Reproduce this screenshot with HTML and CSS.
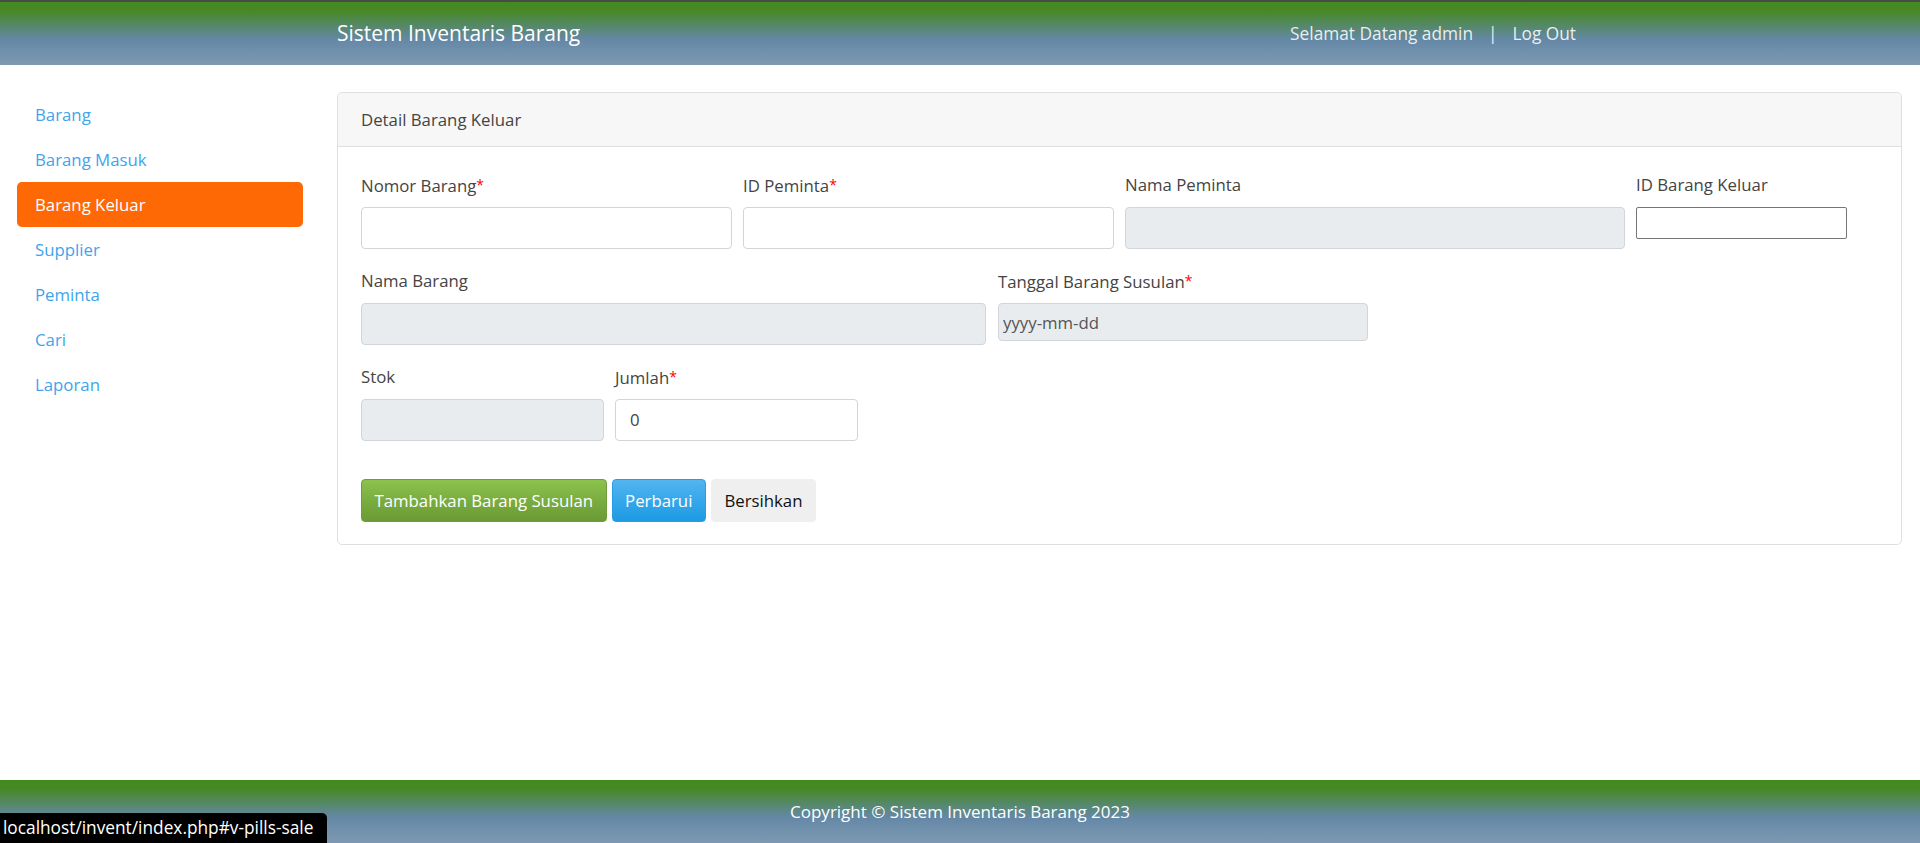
FILE: index.html
```html
<!DOCTYPE html>
<html lang="id">
<head>
<meta charset="utf-8">
<title>Sistem Inventaris Barang</title>
<link rel="stylesheet" href="styles.css">
</head>
<body>
<header class="topbar">
  <div class="topbar-inner">
    <a class="brand" href="#">Sistem Inventaris Barang</a>
    <div class="user-nav">
      <span class="welcome">Selamat Datang admin</span>
      <span class="sep">|</span>
      <a class="logout" href="#">Log Out</a>
    </div>
  </div>
</header>

<main class="main">
  <nav class="sidebar">
    <a class="side-link" href="#">Barang</a>
    <a class="side-link" href="#">Barang Masuk</a>
    <a class="side-link active" href="#">Barang Keluar</a>
    <a class="side-link" href="#">Supplier</a>
    <a class="side-link" href="#">Peminta</a>
    <a class="side-link" href="#">Cari</a>
    <a class="side-link" href="#">Laporan</a>
  </nav>

  <section class="card">
    <div class="card-header">Detail Barang Keluar</div>
    <div class="card-body">
      <div class="form-row row-one">
        <div class="field">
          <label class="label">Nomor Barang<span class="req">*</span></label>
          <input class="control" type="text">
        </div>
        <div class="field">
          <label class="label">ID Peminta<span class="req">*</span></label>
          <input class="control" type="text">
        </div>
        <div class="field">
          <label class="label">Nama Peminta</label>
          <input class="control disabled" type="text" readonly>
        </div>
        <div class="field">
          <label class="label">ID Barang Keluar</label>
          <input class="plain-input" type="text">
        </div>
      </div>

      <div class="form-row row-two">
        <div class="field">
          <label class="label">Nama Barang</label>
          <input class="control disabled" type="text" readonly>
        </div>
        <div class="field">
          <label class="label">Tanggal Barang Susulan<span class="req">*</span></label>
          <input class="control date-input" type="text" placeholder="yyyy-mm-dd" readonly>
        </div>
      </div>

      <div class="form-row row-three">
        <div class="field">
          <label class="label">Stok</label>
          <input class="control disabled" type="text" readonly>
        </div>
        <div class="field">
          <label class="label">Jumlah<span class="req">*</span></label>
          <input class="control" type="text" value="0">
        </div>
      </div>

      <div class="actions">
        <button class="btn btn-green" type="button">Tambahkan Barang Susulan</button>
        <button class="btn btn-blue" type="button">Perbarui</button>
        <button class="btn btn-grey" type="button">Bersihkan</button>
      </div>
    </div>
  </section>
</main>

<footer class="footer">Copyright © Sistem Inventaris Barang 2023</footer>

<div class="status-bubble">localhost/invent/index.php#v-pills-sale</div>
</body>
</html>
```

FILE: styles.css
```css
* { box-sizing: border-box; }

html, body { height: 100%; }

body {
  margin: 0;
  font-family: "Open Sans", "Noto Sans", sans-serif;
  font-size: 16.8px;
  line-height: 1.5;
  color: #444;
  background: #fff;
  display: flex;
  flex-direction: column;
  min-height: 100vh;
}

/* ---------- header ---------- */
.topbar {
  height: 65px;
  border-top: 2px solid #4a4a4a;
  background: linear-gradient(to bottom, #438a1f 0%, #478826 14%, #56886a 38%, #6588a7 60%, #7e99b1 100%);
  flex: none;
}

.topbar-inner {
  height: 100%;
  display: flex;
  align-items: center;
  justify-content: space-between;
  padding: 0 344px 0 337px;
}

.brand {
  color: #fff;
  font-size: 21px;
  text-decoration: none;
  line-height: 31px;
}

.user-nav {
  display: flex;
  align-items: center;
  font-size: 17.3px;
  color: rgba(255, 255, 255, 0.88);
}

.sep { padding: 0 15px; }

.logout {
  color: rgba(255, 255, 255, 0.88);
  text-decoration: none;
}

/* ---------- main ---------- */
.main {
  flex: 1;
  display: flex;
  align-items: flex-start;
  gap: 34px;
  padding: 27px 18px 0 17px;
}

.sidebar {
  width: 286px;
  flex: none;
  display: flex;
  flex-direction: column;
}

.side-link {
  display: block;
  padding: 10px 18px;
  line-height: 25px;
  color: #40a4ec;
  text-decoration: none;
  border-radius: 5px;
}

.side-link.active {
  background: #fe6906;
  color: #fff;
}

/* ---------- card ---------- */
.card {
  flex: 1;
  border: 1px solid #dfdfdf;
  border-radius: 5px;
  background: #fff;
}

.card-header {
  padding: 14px 23px;
  line-height: 25.2px;
  background: #f7f7f7;
  border-bottom: 1px solid #dfdfdf;
  border-radius: 5px 5px 0 0;
  color: #444;
}

.card-body {
  padding: 25px 23px 22px 23px;
}

.form-row {
  display: grid;
  column-gap: 11px;
  margin-bottom: 19px;
}

.row-one { grid-template-columns: 371px 371px 500px 211px; }
.row-two { grid-template-columns: 625px 370px; column-gap: 12px; }
.row-three { grid-template-columns: 243px 243px; }

.field {
  display: flex;
  flex-direction: column;
  align-items: flex-start;
}

.label {
  display: block;
  height: 25.2px;
  line-height: 25.2px;
  margin-bottom: 10px;
  color: #444;
}

.req {
  color: #f00;
  font-size: 14px;
  vertical-align: 2px;
}

.control {
  width: 100%;
  height: 41.6px;
  padding: 0 14px;
  font-family: inherit;
  font-size: 16.8px;
  color: #444;
  background: #fff;
  border: 1px solid #d2d6da;
  border-radius: 4px;
  outline: none;
}

.control.disabled {
  background: #e9ecef;
}

.control.date-input {
  height: 38px;
  padding: 0 4px;
  background: #e9ecef;
}

.control.date-input::placeholder {
  color: #555;
  opacity: 1;
}

.plain-input {
  width: 211px;
  height: 32px;
  padding: 1px 2px;
  font-family: inherit;
  font-size: 14px;
  border: 1px solid #767676;
  border-radius: 2px;
  background: #fff;
  outline: none;
}

/* ---------- buttons ---------- */
.actions {
  display: flex;
  gap: 5px;
  padding-top: 19px;
}

.btn {
  height: 43px;
  padding: 0 12.5px;
  font-family: inherit;
  font-size: 16.8px;
  border-radius: 4px;
  border: 1px solid transparent;
  cursor: pointer;
}

.btn-green {
  color: #fff;
  background: linear-gradient(to bottom, #8dc24d 0%, #7aad40 50%, #6a9a35 100%);
  border-color: #6f9c3c;
}

.btn-blue {
  color: #fff;
  background: linear-gradient(to bottom, #53b5ef 0%, #36a7ea 50%, #1e9ae3 100%);
  border-color: #2a9de2;
}

.btn-grey {
  color: #111;
  background: #efefef;
  border-color: #efefef;
}

/* ---------- footer ---------- */
.footer {
  flex: none;
  height: 63px;
  display: flex;
  align-items: center;
  justify-content: center;
  font-size: 17px;
  color: #fff;
  background: linear-gradient(to bottom, #438a1f 0%, #478826 14%, #56886a 38%, #6588a7 60%, #7e99b1 100%);
}

/* ---------- browser status bubble (overlay) ---------- */
.status-bubble {
  position: fixed;
  left: 0;
  bottom: 0;
  height: 30px;
  padding: 0 14px 0 3px;
  line-height: 30px;
  font-size: 17.3px;
  color: #fff;
  background: #000;
  border-top-right-radius: 5px;
}
```
